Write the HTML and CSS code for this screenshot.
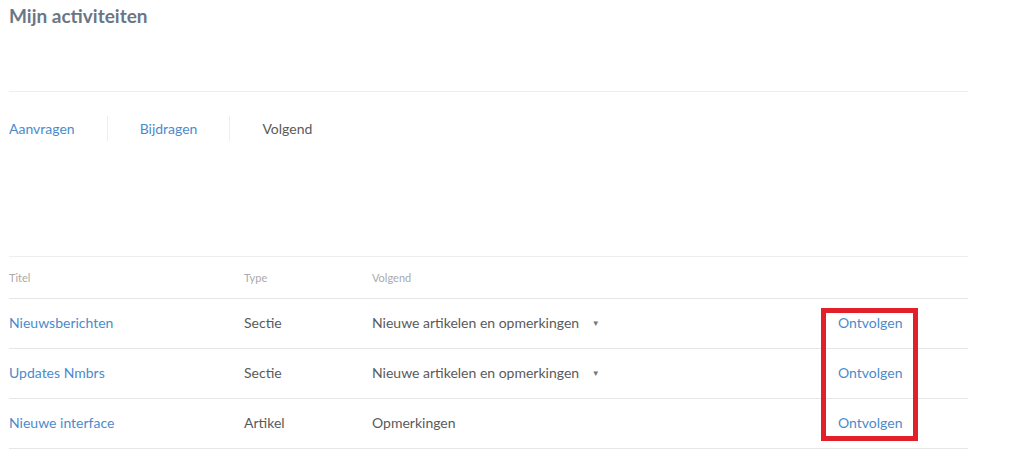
FILE: index.html
```html
<!DOCTYPE html>
<html lang="nl">
<head>
  <meta charset="UTF-8">
  <title>Mijn activiteiten</title>
  <link rel="stylesheet" href="styles.css">
</head>
<body>
  <div class="page">
    <h1 class="page-title">Mijn activiteiten</h1>

    <nav class="tabs">
      <a class="tab" href="#">Aanvragen</a>
      <a class="tab" href="#">Bijdragen</a>
      <span class="tab current">Volgend</span>
    </nav>

    <div class="table-wrap">
      <table class="activity-table">
        <thead>
          <tr>
            <th class="col-title">Titel</th>
            <th class="col-type">Type</th>
            <th class="col-follow">Volgend</th>
            <th class="col-action"></th>
          </tr>
        </thead>
        <tbody>
          <tr>
            <td><a href="#">Nieuwsberichten</a></td>
            <td>Sectie</td>
            <td><span class="select">Nieuwe artikelen en opmerkingen <span class="caret">&#9660;</span></span></td>
            <td><a href="#">Ontvolgen</a></td>
          </tr>
          <tr>
            <td><a href="#">Updates Nmbrs</a></td>
            <td>Sectie</td>
            <td><span class="select">Nieuwe artikelen en opmerkingen <span class="caret">&#9660;</span></span></td>
            <td><a href="#">Ontvolgen</a></td>
          </tr>
          <tr>
            <td><a href="#">Nieuwe interface</a></td>
            <td>Artikel</td>
            <td>Opmerkingen</td>
            <td><a href="#">Ontvolgen</a></td>
          </tr>
        </tbody>
      </table>
      <div class="highlight"></div>
    </div>
  </div>
</body>
</html>
```

FILE: styles.css
```css
body { margin: 0; padding: 0; background: #fff; font-family: "Source Sans Pro", Lato, "Liberation Sans", sans-serif; font-size: 14px; color: #5a5a5a; }
a { color: #4b8bcb; text-decoration: none; }
.page { width: 959px; padding: 0 9px; }
.page-title { margin: 0; padding-top: 4px; height: 87px; font-size: 19px; font-weight: bold; color: #6b7684; border-bottom: 1px solid #eee; }
.tabs { display: flex; align-items: center; padding-top: 24px; height: 25px; margin-bottom: 1px; }
.tab { padding: 0 32px; border-left: 1px solid #eee; line-height: 25px; }
.tab:first-child { padding-left: 0; border-left: none; }
.tab.current { color: #5a5a5a; }
.table-wrap { position: relative; margin-top: 115px; }
.activity-table { width: 100%; border-collapse: collapse; border-top: 1px solid #eee; }
.activity-table th { height: 41px; text-align: left; font-weight: normal; font-size: 11px; color: #aaa; padding: 0; border-bottom: 1px solid #e6e6e6; }
.activity-table td { height: 47px; padding: 0 0 2px; border-bottom: 1px solid #e6e6e6; }
.col-title { width: 235px; }
.col-type { width: 128px; }
.col-follow { width: 466px; }
.select { white-space: nowrap; }
.caret { font-size: 8px; color: #777; margin-left: 9px; vertical-align: 2px; }
.highlight { position: absolute; left: 812px; top: 52px; width: 87px; height: 123px; border: 5px solid #e1202b; }
```
